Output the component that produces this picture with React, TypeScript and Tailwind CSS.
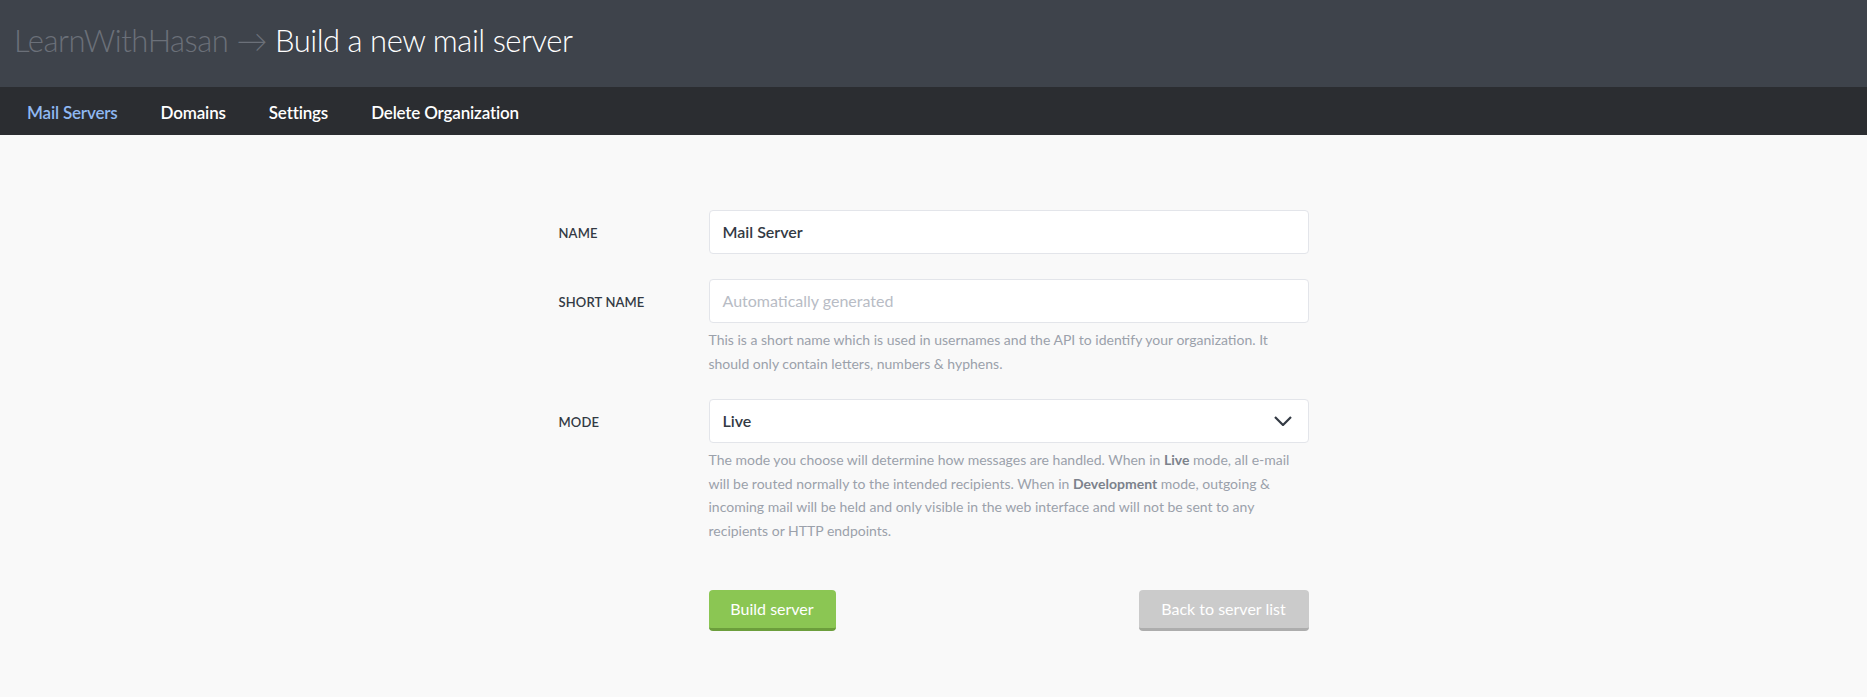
import React from 'react';

const font = { fontFamily: 'Lato, "Open Sans", sans-serif' };

const navItems = ['Mail Servers', 'Domains', 'Settings', 'Delete Organization'];

function Label({ children }: { children: React.ReactNode }) {
  return (
    <div className="w-[150px] shrink-0 h-[44px] pt-[4px] flex items-center text-[13px] font-semibold uppercase text-[#333a44] tracking-[0.01em]">
      {children}
    </div>
  );
}

function Help({ children }: { children: React.ReactNode }) {
  return <p className="mt-[5px] text-[14px] leading-[23.5px] text-[#9ba1ab] pr-[10px]">{children}</p>;
}

export default function App() {
  return (
    <div className="min-h-[697px] bg-[#f9f9f9]" style={font}>
      <header className="h-[87px] bg-[#3e434b] flex items-center pl-[14px] pb-[6px]">
        <h1 className="text-[31px] font-light tracking-[-0.015em]">
          <span className="text-[#6b7079]">LearnWithHasan</span>
          <span className="text-[#6b7079]"> → </span>
          <span className="text-white">Build a new mail server</span>
        </h1>
      </header>
      <nav className="h-[48px] bg-[#2b2d31] flex items-center pl-[27px] pt-[3px] gap-[43px] text-[17px] font-semibold tracking-[-0.01em]">
        {navItems.map((item, i) => (
          <a key={item} className={i === 0 ? 'text-[#8fb8f2]' : 'text-white'}>
            {item}
          </a>
        ))}
      </nav>

      <main className="w-[750px] mx-auto pt-[75px]">
        <div className="flex">
          <Label>Name</Label>
          <div className="flex-1">
            <div className="h-[44px] bg-white border border-[#e3e5ea] rounded-[4px] flex items-center px-[13px] text-[16px] font-semibold text-[#333a44]">
              Mail Server
            </div>
          </div>
        </div>

        <div className="flex mt-[25px]">
          <Label>Short Name</Label>
          <div className="flex-1">
            <div className="h-[44px] bg-white border border-[#e3e5ea] rounded-[4px] flex items-center px-[13px] text-[16px] text-[#b8bcc5]">
              Automatically generated
            </div>
            <Help>
              This is a short name which is used in usernames and the API to identify your organization. It should only
              contain letters, numbers &amp; hyphens.
            </Help>
          </div>
        </div>

        <div className="flex mt-[24px]">
          <Label>Mode</Label>
          <div className="flex-1">
            <div className="h-[44px] bg-white border border-[#e3e5ea] rounded-[4px] flex items-center justify-between pl-[13px] pr-[16px] text-[16px] font-semibold text-[#333a44]">
              Live
              <svg width="18" height="10" viewBox="0 0 18 10" fill="none">
                <path d="M1 1l8 8 8-8" stroke="#333a44" strokeWidth="2.2" />
              </svg>
            </div>
            <Help>
              The mode you choose will determine how messages are handled. When in{' '}
              <b className="font-bold text-[#7c828c]">Live</b> mode, all e-mail will be routed normally to the intended
              recipients. When in <b className="font-bold text-[#7c828c]">Development</b> mode, outgoing &amp; incoming
              mail will be held and only visible in the web interface and will not be sent to any recipients or HTTP
              endpoints.
            </Help>
          </div>
        </div>

        <div className="flex mt-[48px]">
          <div className="w-[150px] shrink-0" />
          <div className="flex-1 flex justify-between">
            <button className="h-[41px] w-[127px] rounded-[4px] bg-[#8bc653] border-b-[3px] border-[#6c9e3c] text-white text-[16px]">
              Build server
            </button>
            <button className="h-[41px] w-[170px] rounded-[4px] bg-[#cbcbcb] border-b-[3px] border-[#adadad] text-white text-[16px]">
              Back to server list
            </button>
          </div>
        </div>
      </main>
    </div>
  );
}
